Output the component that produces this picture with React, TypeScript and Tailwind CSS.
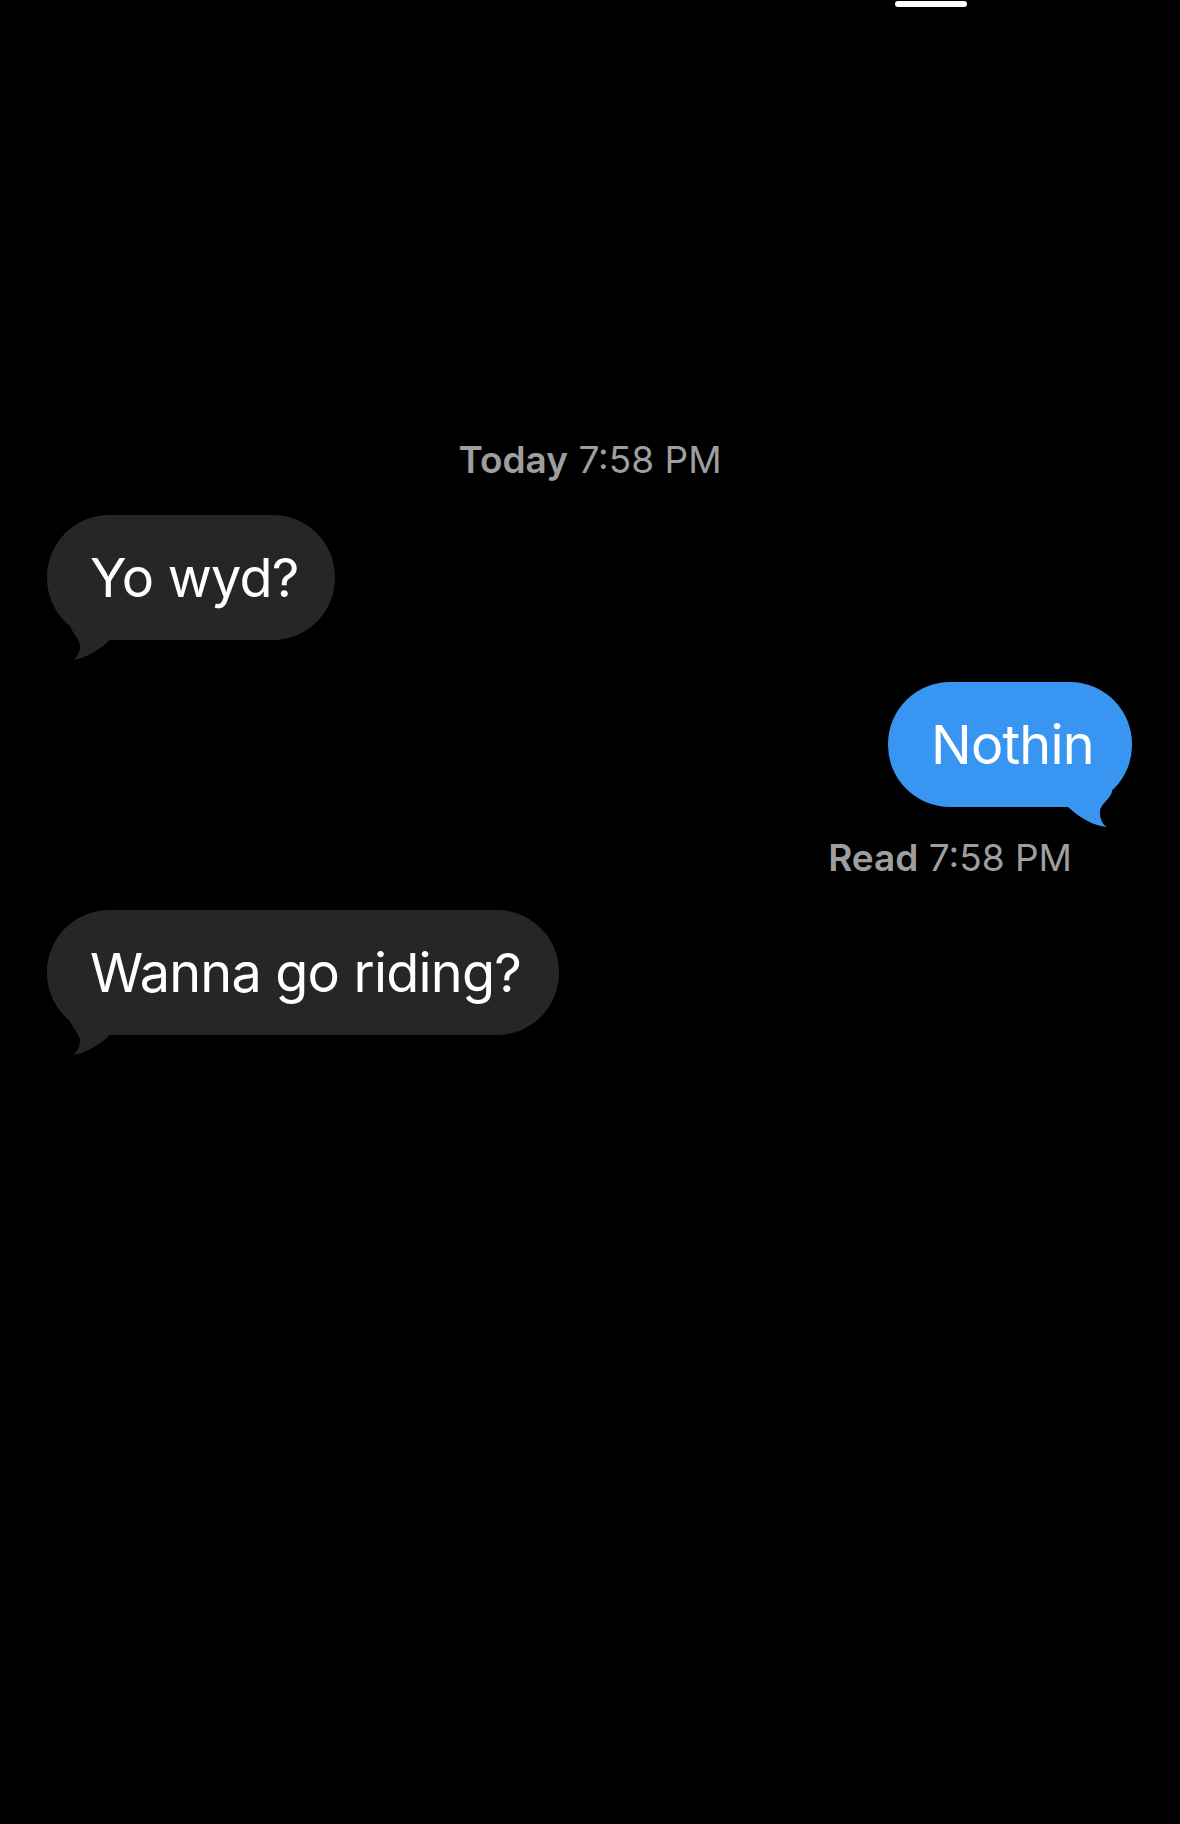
import React from 'react'

type Msg = { text: string; width: string }

function GrayTail() {
  // tail hanging off the bottom-left corner of a received bubble
  return (
    <svg
      className="absolute left-[13px] top-[95px]"
      width="70"
      height="55"
      viewBox="0 0 70 55"
    >
      <path
        d="M8 0 L8 10 C12 25 20 28 20 36 C20 42 17 47 13 50 C26 48 40 40 52 28 L52 0 Z"
        fill="#262628"
      />
    </svg>
  )
}

function BlueTail() {
  return (
    <svg
      className="absolute right-[12px] top-[98px]"
      width="70"
      height="55"
      viewBox="0 0 70 55"
    >
      <path
        d="M62 0 L62 12 C58 22 50 24 50 32 C50 39 52 44 57 47 C44 46 30 38 18 27 L18 0 Z"
        fill="#3895f2"
      />
    </svg>
  )
}

function Received({ text, width }: Msg) {
  return (
    <div className="flex pl-[47px]">
      <div className={`relative h-[125px] ${width}`}>
        <GrayTail />
        <div className="relative h-full w-full rounded-[62px] bg-[#262628] pl-[43px] flex items-center">
          <span className="text-[54px] leading-none tracking-[-0.8px] text-white whitespace-nowrap">{text}</span>
        </div>
      </div>
    </div>
  )
}

function Sent({ text, width }: Msg) {
  return (
    <div className="flex justify-end pr-[48px]">
      <div className={`relative h-[125px] ${width}`}>
        <BlueTail />
        <div className="relative h-full w-full rounded-[62px] bg-[#3895f2] pl-[43px] flex items-center">
          <span className="text-[54px] leading-none tracking-[-0.8px] text-white whitespace-nowrap">{text}</span>
        </div>
      </div>
    </div>
  )
}

export default function App() {
  return (
    <div
      className="h-[1824px] w-full bg-black overflow-hidden"
      style={{ fontFamily: 'Inter, "Noto Sans", "Liberation Sans", sans-serif' }}
    >
      {/* home indicator bit at the top */}
      <div className="pt-[1px] pl-[895px]">
        <div className="h-[6px] w-[72px] rounded-sm bg-white" />
      </div>

      {/* timestamp */}
      <div className="mt-[434px] text-center text-[37px] leading-none text-[#9e9e9e]">
        <span className="font-semibold">Today</span> 7:58 PM
      </div>

      <div className="mt-[37px]">
        <Received text="Yo wyd?" width="w-[288px]" />
      </div>

      <div className="mt-[42px]">
        <Sent text="Nothin" width="w-[244px]" />
      </div>

      <div className="mt-[32px] pr-[108px] text-right text-[37px] leading-none text-[#9e9e9e]">
        <span className="font-semibold">Read</span> 7:58 PM
      </div>

      <div className="mt-[34px]">
        <Received text="Wanna go riding?" width="w-[512px]" />
      </div>
    </div>
  )
}
